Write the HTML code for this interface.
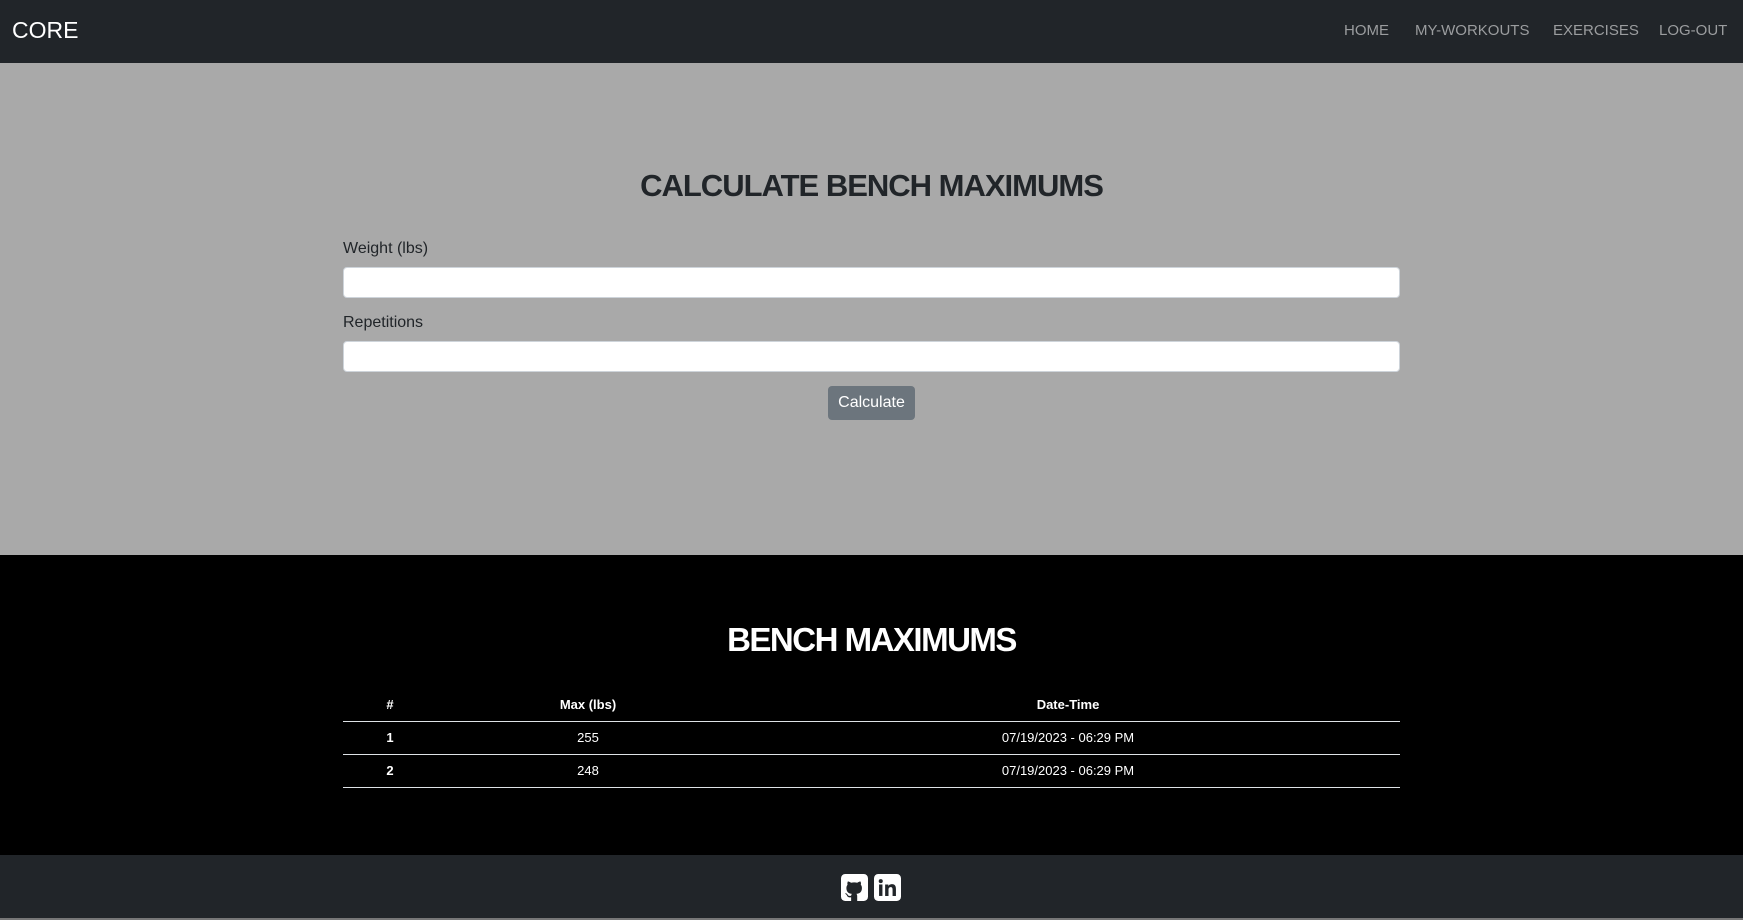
<!DOCTYPE html>
<html><head><meta charset="utf-8"><style>
*{margin:0;padding:0;box-sizing:border-box}
body{width:1743px;height:920px;overflow:hidden;font-family:"Liberation Sans",Arial,sans-serif;background:#212529}
nav{height:63px;background:#212529;position:relative}
.brand{position:absolute;left:12px;top:17px;color:#fff;font-size:23px}
.links{position:absolute;top:22px;font-size:15px;color:#9b9d9f}
.links span{position:absolute;white-space:nowrap}
.gray{position:absolute;top:63px;left:0;width:1743px;height:492px;background:#a9a9a9}
.black{position:absolute;top:555px;left:0;width:1743px;height:300px;background:#000}
h2{position:absolute;width:1743px;text-align:center;font-weight:bold;}
.lbl{position:absolute;left:343px;font-size:16px;color:#212529}
.inp{position:absolute;left:343px;width:1057px;height:31px;background:#fff;border:1px solid #ced4da;border-radius:4px}
.btn{position:absolute;left:828px;top:386px;width:87px;height:34px;background:#6c757d;border-radius:4px;color:#fff;font-size:16px;text-align:center;line-height:34px}
.t{position:absolute;color:#fff;font-size:13px;transform:translateX(-50%);white-space:nowrap}
.ln{position:absolute;left:343px;width:1057px;height:1px;background:#dee2e6}
footer{position:absolute;top:855px;left:0;width:1743px;height:65px;background:#212529;border-bottom:2px solid #777}
</style></head><body>
<nav><div class="brand">CORE</div>
<div class="links"><span style="left:1344px">HOME</span><span style="left:1415px">MY-WORKOUTS</span><span style="left:1553px">EXERCISES</span><span style="left:1659px">LOG-OUT</span></div></nav>
<div class="gray">
<h2 style="top:105px;font-size:31px;letter-spacing:-1px;color:#212529">CALCULATE BENCH MAXIMUMS</h2>
<div class="lbl" style="top:177px">Weight (lbs)</div>
<div class="inp" style="top:204px"></div>
<div class="lbl" style="top:251px">Repetitions</div>
<div class="inp" style="top:278px"></div>
<div class="btn" style="top:323px">Calculate</div>
</div>
<div class="black">
<h2 style="top:66px;font-size:33px;letter-spacing:-1.5px;color:#fff">BENCH MAXIMUMS</h2>
<div class="t" style="left:390px;top:142px;font-weight:bold">#</div>
<div class="t" style="left:588px;top:142px;font-weight:bold">Max (lbs)</div>
<div class="t" style="left:1068px;top:142px;font-weight:bold">Date-Time</div>
<div class="ln" style="top:166px"></div>
<div class="t" style="left:390px;top:175px;font-weight:bold">1</div>
<div class="t" style="left:588px;top:175px">255</div>
<div class="t" style="left:1068px;top:175px">07/19/2023 - 06:29 PM</div>
<div class="ln" style="top:199px"></div>
<div class="t" style="left:390px;top:208px;font-weight:bold">2</div>
<div class="t" style="left:588px;top:208px">248</div>
<div class="t" style="left:1068px;top:208px">07/19/2023 - 06:29 PM</div>
<div class="ln" style="top:232px"></div>
</div>
<footer>
<svg style="position:absolute;left:841px;top:19px" width="27" height="27" viewBox="0 0 16 16"><rect width="16" height="16" rx="2.5" fill="#fff"/><path fill="#212529" d="M6 16v-2.2c-2 .4-2.4-.9-2.4-.9-.3-.8-.8-1-.8-1-.7-.5 0-.5 0-.5.7.1 1.1.8 1.1.8.6 1.1 1.7.8 2.1.6.1-.5.3-.8.5-1-1.6-.2-3.3-.8-3.3-3.5 0-.8.3-1.4.7-1.9-.1-.2-.3-.9.1-1.9 0 0 .6-.2 2 .7a7 7 0 0 1 3.6 0c1.4-.9 2-.7 2-.7.4 1 .2 1.7.1 1.9.5.5.7 1.1.7 1.9 0 2.7-1.7 3.3-3.3 3.5.3.2.5.7.5 1.3V16z"/></svg>
<svg style="position:absolute;left:874px;top:19px" width="27" height="27" viewBox="0 0 16 16"><rect width="16" height="16" rx="2.5" fill="#fff"/><rect x="3" y="6.2" width="2" height="6.8" fill="#212529"/><circle cx="4" cy="4.2" r="1.2" fill="#212529"/><path fill="#212529" d="M6.6 6.2h1.9v.9c.3-.5 1-1.1 2.1-1.1 2 0 2.4 1.3 2.4 3V13h-2V9.4c0-.8-.1-1.6-1.1-1.6S8.6 8.5 8.6 9.3V13h-2z"/></svg>
</footer>
</body></html>
